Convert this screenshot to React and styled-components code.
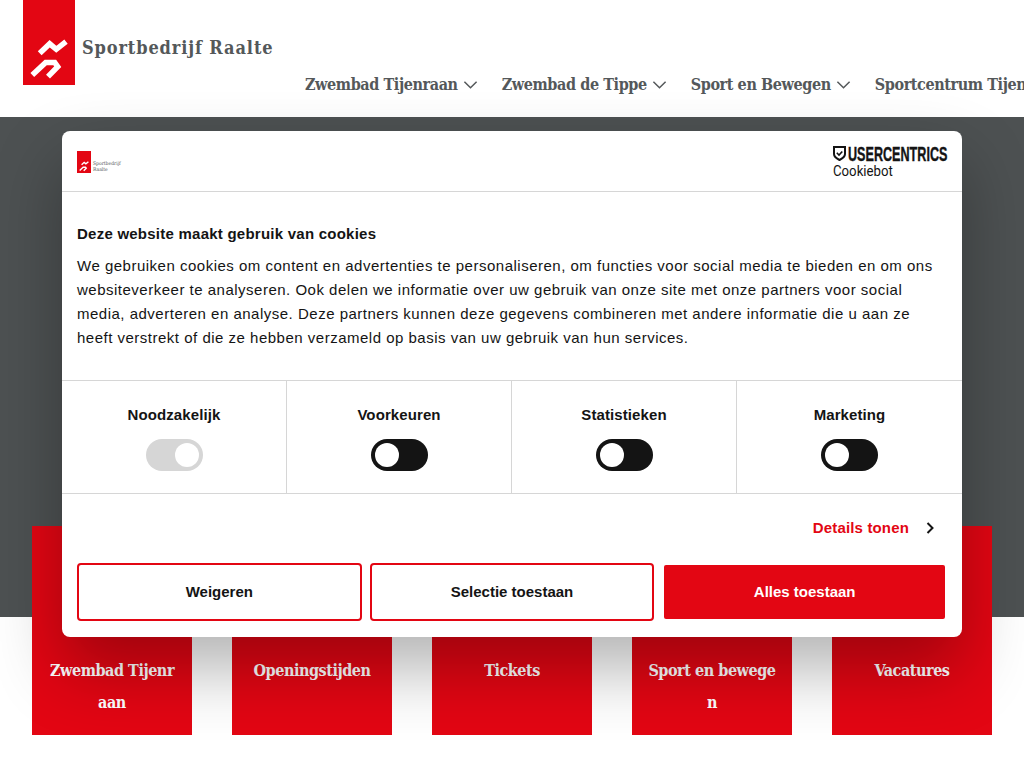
import styled, { createGlobalStyle } from "styled-components";

const Global = createGlobalStyle`
  html, body {
    margin: 0;
    padding: 0;
    height: 768px;
    overflow: hidden;
    background: #fff;
  }
`;

const slab = `"DejaVu Serif Condensed", "DejaVu Serif", serif`;
const sans = `"Liberation Sans", Arial, sans-serif`;

const Page = styled.div`
  width: 1024px;
  height: 768px;
  overflow: hidden;
  position: relative;
`;

const Header = styled.header`
  height: 117px;
  display: flex;
  padding-left: 23px;
  box-sizing: border-box;
`;

const LogoBlock = styled.div`
  width: 52px;
  height: 85px;
  background: #e30613;
  flex: none;
`;

const Brand = styled.div`
  margin: 37px 0 0 7px;
  width: 223px;
  flex: none;
  font: 600 18px/22px ${slab};
  letter-spacing: 0.88px;
  color: #54585a;
  white-space: nowrap;
`;

const Nav = styled.nav`
  display: flex;
  gap: 24px;
  margin-top: 74px;
  height: 22px;
`;

const NavItem = styled.a`
  display: flex;
  align-items: center;
  gap: 5px;
  font: 600 16px/22px ${slab};
  letter-spacing: -0.4px;
  color: #54585a;
  white-space: nowrap;
`;

const Hero = styled.section`
  height: 500px;
  background: #4d5152;
`;

const Tiles = styled.div`
  display: flex;
  gap: 40px;
  padding: 0 32px;
  margin-top: -91px;
`;

const Tile = styled.a`
  width: 160px;
  height: 209px;
  box-sizing: border-box;
  padding: 129px 16px 0;
  background: #e30613;
  color: #fff;
  text-align: center;
  font: 600 16px/32px ${slab};
  letter-spacing: -0.45px;
  word-break: break-all;
`;

const Dialog = styled.div`
  position: absolute;
  left: 62px;
  top: 131px;
  width: 900px;
  height: 506px;
  background: #fff;
  border-radius: 8px;
  box-shadow: 0 32px 68px rgba(0, 0, 0, 0.3);
  font-family: ${sans};
  color: #141414;
  display: flex;
  flex-direction: column;
`;

const DialogHead = styled.div`
  height: 61px;
  flex: none;
  box-sizing: border-box;
  border-bottom: 1px solid #d6d6d6;
  padding: 0 15px;
  display: flex;
  align-items: center;
  justify-content: space-between;
`;

const SmallLogo = styled.div`
  display: flex;
  align-items: flex-end;
  gap: 2px;
  margin-top: 2px;
`;

const SmallMark = styled.div`
  width: 14px;
  height: 22px;
  background: #e30613;
`;

const SmallName = styled.div`
  font: 400 5px/6px ${slab};
  color: #54585a;
  padding-bottom: 1px;
`;

const Vendor = styled.div`
  display: flex;
  flex-direction: column;
  width: 114px;
  margin-top: 3px;
`;

const VendorTop = styled.div`
  display: flex;
  align-items: center;
  gap: 2px;
  height: 16px;
`;

const VendorName = styled.span`
  font: 700 20px/16px ${sans};
  color: #141414;
  transform: scaleX(0.63);
  transform-origin: left center;
  -webkit-text-stroke: 0.4px #141414;
  white-space: nowrap;
`;

const VendorSub = styled.span`
  margin-top: 1px;
  font: 400 15px/17px Roboto, ${sans};
  color: #141414;
  transform: scaleX(0.88);
  transform-origin: left center;
`;

const Body = styled.div`
  height: 188px;
  flex: none;
  box-sizing: border-box;
  padding: 30px 15px 0;
`;

const Title = styled.h2`
  margin: 0 0 8px;
  font: 700 15px/24px ${sans};
  letter-spacing: 0.24px;
`;

const Text = styled.p`
  margin: 0;
  font: 400 15px/24px ${sans};
  letter-spacing: 0.5px;
`;

const Choices = styled.div`
  height: 114px;
  flex: none;
  box-sizing: border-box;
  display: grid;
  grid-template-columns: repeat(4, 1fr);
  border-top: 1px solid #d6d6d6;
  border-bottom: 1px solid #d6d6d6;
`;

const Choice = styled.div`
  display: flex;
  flex-direction: column;
  align-items: center;
  padding-top: 22px;
  gap: 12px;
  font: 700 15px/24px ${sans};
  letter-spacing: 0.1px;
  &:not(:last-child) {
    border-right: 1px solid #d6d6d6;
  }
`;

const Toggle = styled.span`
  width: 57px;
  height: 32px;
  border-radius: 16px;
  box-sizing: border-box;
  padding: 4px;
  display: flex;
  justify-content: ${(p) => (p.$locked ? "flex-end" : "flex-start")};
  background: ${(p) => (p.$locked ? "#d6d6d6" : "#141414")};
  &::after {
    content: "";
    width: 24px;
    height: 24px;
    border-radius: 50%;
    background: #fff;
  }
`;

const DetailRow = styled.div`
  display: flex;
  justify-content: flex-end;
  align-items: center;
  gap: 17px;
  padding: 21px 27px 0 0;
  height: 47px;
  box-sizing: border-box;
  flex: none;
  font: 700 15px/24px ${sans};
  letter-spacing: 0.15px;
  color: #e30613;
`;

const Buttons = styled.div`
  display: flex;
  gap: 8px;
  padding: 22px 15px 0;
`;

const Button = styled.button`
  flex: 1;
  height: 58px;
  box-sizing: border-box;
  border-radius: 4px;
  border: 2px solid #e30613;
  background: #fff;
  color: #141414;
  font: 700 15px/20px ${sans};
  padding: 0;
`;

const PrimaryButton = styled(Button)`
  background: #e30613;
  color: #fff;
  background-clip: padding-box;
  border-color: transparent;
`;

const Chevron = () => (
  <svg width="15" height="16" viewBox="0 0 16 16" fill="none" stroke="#54585a" strokeWidth="1.6">
    <path d="M1.5 4.5 8 11l6.5-6.500" />
  </svg>
);

const RunnerMark = ({ width, height }) => (
  <svg width={width} height={height} viewBox="0 0 52 85" fill="none" stroke="#fff" strokeWidth="5.5" style={{ display: "block" }}>
    <path d="M16.700 53.300 26.700 43.800l6.600 5.500 9.700-7.600" />
    <path d="M9.300 75 22.700 62.500h9l3 4.200-9.700 10" />
  </svg>
);

const navItems = ["Zwembad Tijenraan", "Zwembad de Tippe", "Sport en Bewegen", "Sportcentrum Tijenraan"];
const tiles = ["Zwembad Tijenraan", "Openingstijden", "Tickets", "Sport en bewegen", "Vacatures"];
const choices = ["Noodzakelijk", "Voorkeuren", "Statistieken", "Marketing"];

export default function App() {
  return (
    <Page>
      <Global />
      <Header>
        <LogoBlock>
          <RunnerMark width={52} height={85} />
        </LogoBlock>
        <Brand>Sportbedrijf Raalte</Brand>
        <Nav>
          {navItems.map((n) => (
            <NavItem key={n}>
              {n}
              <Chevron />
            </NavItem>
          ))}
        </Nav>
      </Header>
      <Hero />
      <Tiles>
        {tiles.map((t) => (
          <Tile key={t}>{t}</Tile>
        ))}
      </Tiles>
      <Dialog>
        <DialogHead>
          <SmallLogo>
            <SmallMark>
              <RunnerMark width={14} height={22} />
            </SmallMark>
            <SmallName>
              Sportbedrijf
              <br />
              Raalte
            </SmallName>
          </SmallLogo>
          <Vendor>
            <VendorTop>
              <svg width="13" height="15" viewBox="0 0 13 15" fill="none" stroke="#141414" strokeWidth="2" style={{ flex: "none" }}>
                <path d="M1 1h11v7c0 3-2.500 4.500-5.500 6C3.500 12.500 1 11 1 8z" />
                <path d="M3.800 6.800 6 9l3.300-3.500" strokeWidth="1.600" />
              </svg>
              <VendorName>USERCENTRICS</VendorName>
            </VendorTop>
            <VendorSub>Cookiebot</VendorSub>
          </Vendor>
        </DialogHead>
        <Body>
          <Title>Deze website maakt gebruik van cookies</Title>
          <Text>
            We gebruiken cookies om content en advertenties te personaliseren, om functies voor social media te bieden en om ons
            websiteverkeer te analyseren. Ook delen we informatie over uw gebruik van onze site met onze partners voor social
            media, adverteren en analyse. Deze partners kunnen deze gegevens combineren met andere informatie die u aan ze
            heeft verstrekt of die ze hebben verzameld op basis van uw gebruik van hun services.
          </Text>
        </Body>
        <Choices>
          {choices.map((c, i) => (
            <Choice key={c}>
              {c}
              <Toggle $locked={i === 0} />
            </Choice>
          ))}
        </Choices>
        <DetailRow>
          Details tonen
          <svg width="9" height="14" viewBox="0 0 9 14" fill="none" stroke="#141414" strokeWidth="2">
            <path d="M1.500 2 6.500 7l-5 5" />
          </svg>
        </DetailRow>
        <Buttons>
          <Button>Weigeren</Button>
          <Button>Selectie toestaan</Button>
          <PrimaryButton>Alles toestaan</PrimaryButton>
        </Buttons>
      </Dialog>
    </Page>
  );
}
